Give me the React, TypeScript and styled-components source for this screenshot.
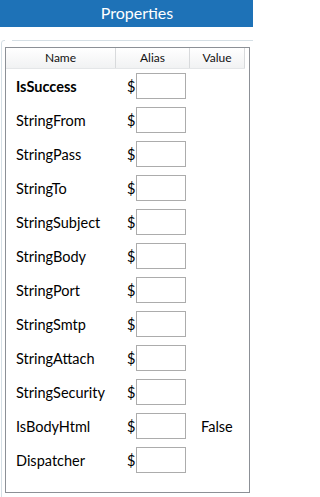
import React from "react";
import styled, {createGlobalStyle} from "styled-components";

const GlobalStyle = createGlobalStyle`
    html, body {
        margin: 0;
        padding: 0;
        background: #ffffff;
        overflow: hidden;
    }
    body {
        font-family: Lato, "Liberation Sans", sans-serif;
        color: #000000;
    }
`

const properties = [
    {name: "IsSuccess", bold: true, value: ""},
    {name: "StringFrom", value: ""},
    {name: "StringPass", value: ""},
    {name: "StringTo", value: ""},
    {name: "StringSubject", value: ""},
    {name: "StringBody", value: ""},
    {name: "StringPort", value: ""},
    {name: "StringSmtp", value: ""},
    {name: "StringAttach", value: ""},
    {name: "StringSecurity", value: ""},
    {name: "IsBodyHtml", value: "False"},
    {name: "Dispatcher", value: ""},
];

export default function App() {
    return (
        <Page>
            <GlobalStyle/>
            <TitleBar>Properties</TitleBar>
            <GroupBox>
                <Legend/>
                <Grid>
                    <HeaderRow>
                        <HeaderCell>Name</HeaderCell>
                        <HeaderCell>Alias</HeaderCell>
                        <HeaderCell>Value</HeaderCell>
                    </HeaderRow>
                    {properties.map((p) => (
                        <Row key={p.name}>
                            <NameCell $bold={p.bold}>{p.name}</NameCell>
                            <AliasCell>
                                <Dollar>$</Dollar>
                                <AliasInput type="text"/>
                            </AliasCell>
                            <ValueCell>{p.value}</ValueCell>
                        </Row>
                    ))}
                </Grid>
            </GroupBox>
        </Page>
    );
}

const Page = styled.div`
    width: 253px;
    height: 497px;
    overflow: hidden;
`

const TitleBar = styled.div`
    height: 27px;
    background: #1e72b7;
    color: #ffffff;
    font-size: 16px;
    line-height: 25px;
    text-align: center;
    padding-left: 21px;
`

const GroupBox = styled.fieldset`
    margin: 13px 0 0 1px;
    padding: 0 0 0 3px;
    border: 1px solid #d5dfe5;
    border-radius: 3px;
    width: 262px;
    height: 470px;
    box-sizing: border-box;
    min-width: 0;
`

const Legend = styled.legend`
    width: 7px;
    height: 0;
    padding: 0;
    margin-left: 0;
`

const Grid = styled.div`
    margin-top: 6px;
    width: 245px;
    height: 446px;
    box-sizing: border-box;
    border: 1px solid #8c9096;
`

const HeaderRow = styled.div`
    display: grid;
    grid-template-columns: 110px 74px 55px;
    height: 20px;
    background: linear-gradient(#ffffff, #f1f2f3);
    border-bottom: 1px solid #e4e6e8;
    width: 239px;
`

const HeaderCell = styled.div`
    border-right: 1px solid #d8dadc;
    font-size: 12px;
    line-height: 20px;
    text-align: center;
    color: #111111;
`

const Row = styled.div`
    display: grid;
    grid-template-columns: 110px 74px 55px;
    height: 34px;
    align-items: center;
`

const NameCell = styled.div<{ $bold?: boolean }>`
    padding-left: 10px;
    font-size: 14.5px;
    font-weight: ${(p) => (p.$bold ? 700 : 400)};
`

const AliasCell = styled.div`
    display: flex;
    align-items: center;
    padding-left: 11px;
    gap: 1px;
`

const Dollar = styled.span`
    font-size: 14.5px;
    width: 8px;
`

const AliasInput = styled.input`
    width: 50px;
    height: 26px;
    box-sizing: border-box;
    border: 1px solid #acacac;
    margin: 0;
    padding: 0;
    outline: none;
`

const ValueCell = styled.div`
    padding-left: 11px;
    font-size: 14.5px;
`
